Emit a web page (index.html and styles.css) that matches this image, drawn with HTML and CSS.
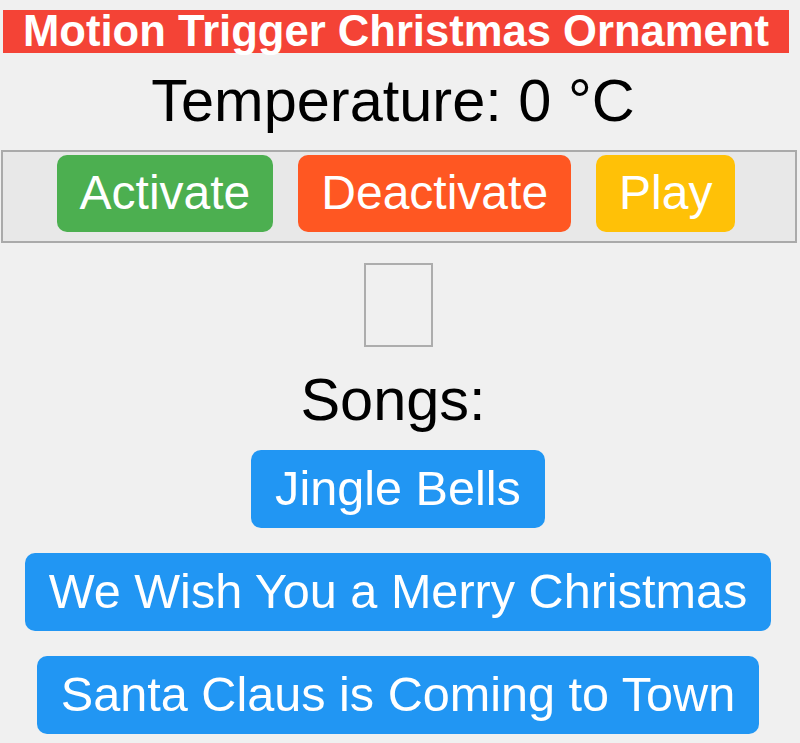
FILE: index.html
```html
<!DOCTYPE html>
<html lang="en">
<head>
    <meta charset="UTF-8">
    <meta name="viewport" content="width=device-width, initial-scale=1.0">
    <title>Motion Trigger Christmas Ornament</title>
    <link rel="stylesheet" href="styles.css">
</head>
<body>
    <h1 class="title">Motion Trigger Christmas Ornament</h1>
    <h2 class="temperature">Temperature: <span id="temp">0</span> °C</h2>

    <div class="controls">
        <button class="btn btn-activate">Activate</button>
        <button class="btn btn-deactivate">Deactivate</button>
        <button class="btn btn-play">Play</button>
    </div>

    <div class="status-box"></div>

    <h2 class="songs-title">Songs:</h2>
    <div class="songs">
        <button class="btn btn-song">Jingle Bells</button>
        <button class="btn btn-song">We Wish You a Merry Christmas</button>
        <button class="btn btn-song">Santa Claus is Coming to Town</button>
    </div>
</body>
</html>
```

FILE: styles.css
```css
body {
    font-family: "Liberation Sans", Arial, sans-serif;
    background-color: #f0f0f0;
    margin: 0;
    padding: 10px 0 0 0;
    text-align: center;
}
.title {
    margin: 0 11px 0 3px;
    background-color: #f44336;
    color: #ffffff;
    font-size: 43.6px;
    font-weight: bold;
    line-height: 43px;
}
.temperature,
.songs-title {
    margin: 15px 0 0 0;
    padding-right: 14px;
    font-size: 59.5px;
    font-weight: normal;
    line-height: 66px;
    color: #000;
}
.controls {
    margin: 16px 3px 0 1px;
    padding: 3px 6px 9px 0;
    border: 2px solid #aaaaaa;
    background-color: #e8e8e8;
    display: flex;
    justify-content: center;
    gap: 25px;
}
.btn {
    font-family: "Liberation Sans", Arial, sans-serif;
    font-size: 48px;
    line-height: 55px;
    padding: 10px 23px 12px;
    color: #ffffff;
    border: none;
    border-radius: 10px;
    cursor: pointer;
}
.btn-activate {
    background-color: #4caf50;
}
.btn-deactivate {
    background-color: #ff5722;
}
.btn-play {
    background-color: #ffc107;
}
.status-box {
    width: 65px;
    height: 80px;
    margin: 20px auto 0;
    border: 2px solid #adadad;
    position: relative;
    left: -2px;
}
.songs-title {
    margin-top: 20px;
}
.songs {
    margin-top: 17px;
    padding-right: 4px;
    display: flex;
    flex-direction: column;
    align-items: center;
    gap: 25px;
}
.btn-song {
    background-color: #2196f3;
    font-size: 48.6px;
    padding: 11px 24px 12px;
}
```
